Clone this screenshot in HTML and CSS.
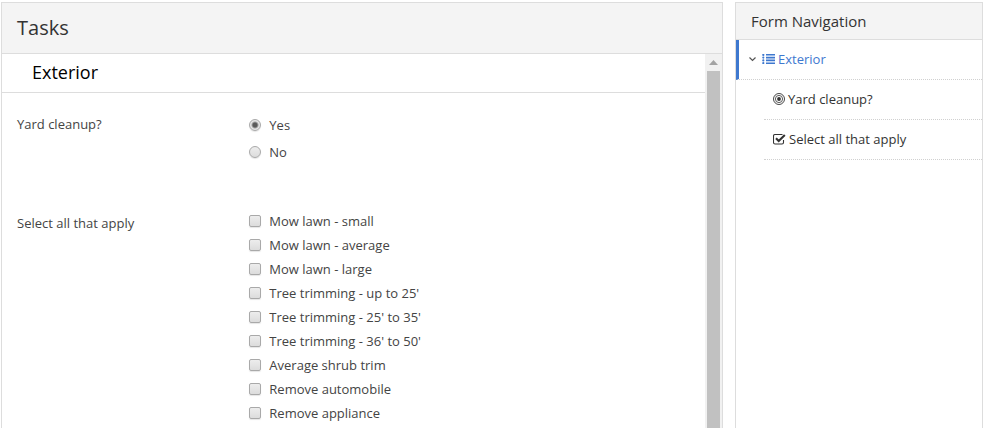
FILE: index.html
```html
<!DOCTYPE html>
<html lang="en">
<head>
    <meta charset="UTF-8">
    <meta name="viewport" content="width=device-width, initial-scale=1.0">
    <title>Tasks</title>
    <link rel="stylesheet" href="styles.css">
</head>
<body>

<div class="page">
    <main class="panel tasks">
        <h1 class="tasks-title">Tasks</h1>
        <div class="tasks-body">
            <form class="tasks-form">
                <h2 class="section-title">Exterior</h2>
                <div class="question" role="radiogroup" aria-labelledby="yardLabel">
                    <div class="question-label" id="yardLabel">Yard cleanup?</div>
                    <div class="options radios">
                        <label class="option"><input type="radio" name="yard" value="yes" checked> Yes</label>
                        <label class="option"><input type="radio" name="yard" value="no"> No</label>
                    </div>
                </div>
                <div class="question" role="group" aria-labelledby="applyLabel">
                    <div class="question-label" id="applyLabel">Select all that apply</div>
                    <div class="options checks">
                        <label class="option"><input type="checkbox" name="apply"> Mow lawn - small</label>
                        <label class="option"><input type="checkbox" name="apply"> Mow lawn - average</label>
                        <label class="option"><input type="checkbox" name="apply"> Mow lawn - large</label>
                        <label class="option"><input type="checkbox" name="apply"> Tree trimming - up to 25'</label>
                        <label class="option"><input type="checkbox" name="apply"> Tree trimming - 25' to 35'</label>
                        <label class="option"><input type="checkbox" name="apply"> Tree trimming - 36' to 50'</label>
                        <label class="option"><input type="checkbox" name="apply"> Average shrub trim</label>
                        <label class="option"><input type="checkbox" name="apply"> Remove automobile</label>
                        <label class="option"><input type="checkbox" name="apply"> Remove appliance</label>
                    </div>
                </div>
            </form>
            <div class="scrollbar" aria-hidden="true">
                <svg class="scroll-arrow" width="17" height="17" viewBox="0 0 17 17"><path d="M4 11L8.5 6L13 11z" fill="#a3a3a3"/></svg>
                <div class="scroll-thumb"></div>
            </div>
        </div>
    </main>

    <aside class="panel sidebar">
        <h2 class="sidebar-title">Form Navigation</h2>
        <nav>
            <a class="nav-item active" href="#">
                <svg class="chevron" width="8" height="8" viewBox="0 0 8 8"><path d="M1.500 2.500L4.500 5.500L7.500 2.500" fill="none" stroke="#555" stroke-width="1.2"/></svg>
                <svg width="13" height="10" viewBox="0 0 13 10" fill="#3e78cf">
                    <path d="M4 0h9v1.600H4zM4 2.800h9v1.600H4zM4 5.600h9v1.600H4zM4 8.400h9v1.600H4z"/>
                    <circle cx="1.3" cy=".9" r="1.1"/><circle cx="1.3" cy="3.6" r="1.1"/><circle cx="1.3" cy="6.4" r="1.1"/><circle cx="1.3" cy="9.1" r="1.1"/>
                </svg>
                <span>Exterior</span>
            </a>
            <div class="nav-children">
                <a class="nav-item" href="#">
                    <svg width="12" height="12" viewBox="0 0 12 12" fill="none" stroke="#333">
                        <circle cx="6" cy="6" r="5.5" stroke-width=".9"/>
                        <circle cx="6" cy="6" r="3.6" stroke-width=".8"/>
                        <circle cx="6" cy="6" r="1.9" fill="#333" stroke="none"/>
                    </svg>
                    <span>Yard cleanup?</span>
                </a>
                <a class="nav-item" href="#">
                    <svg width="13" height="12" viewBox="0 0 13 12" fill="none" stroke="#333">
                        <path d="M10.5 7v2.5q0 1.500-1.500 1.500H2Q.5 11 .5 9.500V3Q.5 1.500 2 1.500h7.500" stroke-width="1.100"/>
                        <path d="M3 5.300L5.700 8L11.800 2" stroke-width="2.100"/>
                    </svg>
                    <span>Select all that apply</span>
                </a>
            </div>
        </nav>
    </aside>
</div>

</body>
</html>
```

FILE: styles.css
```css
* {
    box-sizing: border-box;
}

body {
    margin: 0;
    font-family: "Open Sans", sans-serif;
    font-size: 13px;
    line-height: 20px;
    color: #444;
    background-color: #fff;
}

h1, h2 {
    margin: 0;
    font-weight: 400;
}

.page {
    display: flex;
    gap: 12px;
    height: 100vh;
    padding: 2px 1px 0;
    overflow: hidden;
}

.panel {
    border: 1px solid #ddd;
    border-bottom: none;
}

.tasks {
    flex: 1;
    display: flex;
    flex-direction: column;
    min-width: 0;
}

.tasks-title {
    padding: 10px 15px;
    font-size: 20px;
    line-height: 30px;
    color: #333;
    background-color: #f4f4f4;
    border-bottom: 1px solid #ddd;
}

.tasks-body {
    flex: 1;
    display: flex;
    min-height: 0;
}

.tasks-form {
    flex: 1;
    overflow: hidden;
}

.section-title {
    padding: 6px 30px 8px;
    font-size: 18px;
    line-height: 24px;
    color: #000;
    border-bottom: 1px solid #ddd;
}

.question {
    display: grid;
    grid-template-columns: 1fr 2fr;
    gap: 12px;
    padding: 19px 15px 30px;
}

.question-label {
    padding-top: 2px;
}

.options {
    display: flex;
    flex-direction: column;
}

.option {
    display: flex;
    align-items: center;
    gap: 8px;
}

.radios {
    gap: 7px;
    padding-top: 3px;
}

.checks {
    gap: 4px;
}

.option input {
    appearance: none;
    width: 12px;
    height: 12px;
    margin: 0;
    border: 1px solid #a9a9a9;
    border-radius: 2px;
    background: linear-gradient(#ededed, #dcdcdc);
    box-shadow: 0 1px 1px rgba(0, 0, 0, 0.1);
}

.option input[type="radio"] {
    border-radius: 50%;
}

.option input[type="radio"]:checked {
    background: radial-gradient(circle, #5a5a5a 2px, #e6e6e6 4px);
}

.option input[type="checkbox"]:checked {
    background: #666;
}

.scrollbar {
    display: flex;
    flex-direction: column;
    width: 17px;
    background-color: #f1f1f1;
}

.scroll-arrow {
    flex: none;
}

.scroll-thumb {
    flex: 1;
    margin: 0 2px;
    background-color: #c1c1c1;
}

.sidebar {
    flex: none;
    width: 248px;
}

.sidebar-title {
    padding: 8px 15px;
    font-size: 15px;
    line-height: 20px;
    color: #333;
    background-color: #f4f4f4;
    border-bottom: 1px solid #ddd;
}

.nav-item {
    display: flex;
    align-items: center;
    gap: 3px;
    height: 40px;
    padding: 0 9px 2px;
    color: #333;
    text-decoration: none;
    border-bottom: 1px dotted #d0d0d0;
}

.nav-item.active {
    color: #3e78cf;
    border-left: 3px solid #3e78cf;
}

.chevron {
    margin-right: 3px;
}

.nav-children {
    padding-left: 28px;
}
```
